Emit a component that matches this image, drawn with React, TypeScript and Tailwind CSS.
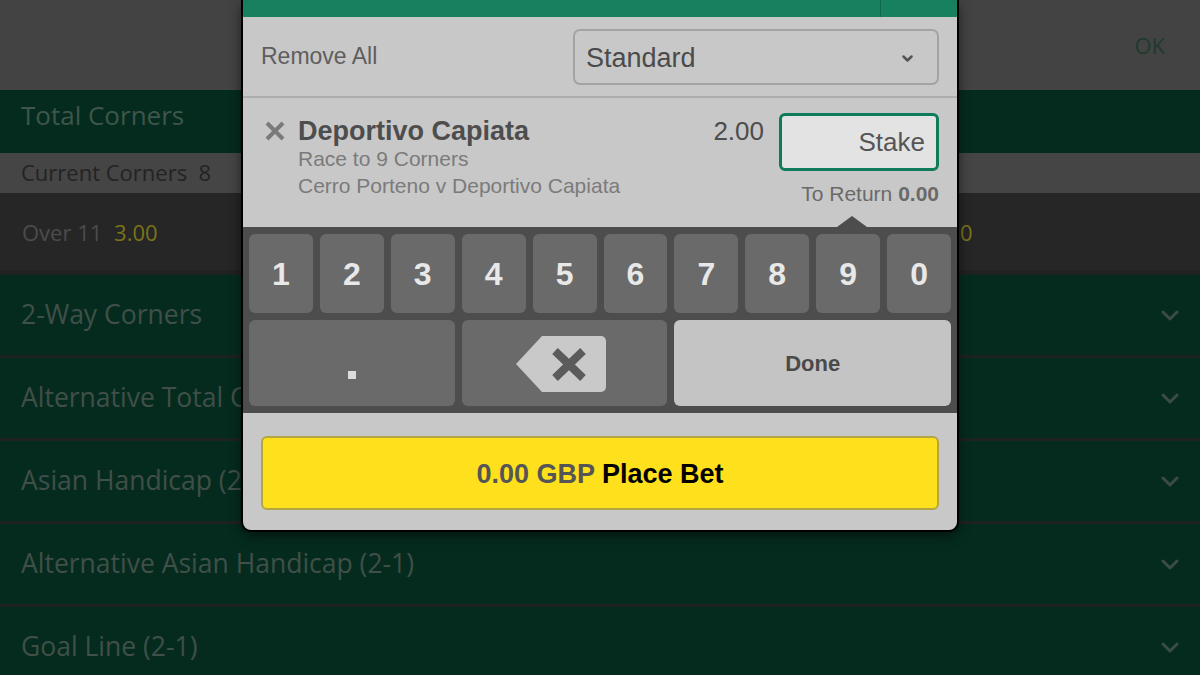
import React from 'react';

const markets = [
  '2-Way Corners',
  'Alternative Total Corners',
  'Asian Handicap (2-1)',
  'Alternative Asian Handicap (2-1)',
  'Goal Line (2-1)',
];

const keys = ['1', '2', '3', '4', '5', '6', '7', '8', '9', '0'];

const Chevron = () => (
  <svg width="18" height="11" viewBox="0 0 18 11" fill="none">
    <polyline points="2,2 9,9 16,2" stroke="#3a4c43" strokeWidth="3" strokeLinecap="round" strokeLinejoin="round" />
  </svg>
);

const BackspaceIcon = () => (
  <svg width="90" height="56" viewBox="0 0 90 56">
    <path d="M26 0 H85 a5 5 0 0 1 5 5 V51 a5 5 0 0 1 -5 5 H26 L0 28 Z" fill="#c9c9c9" />
    <path d="M39 15 L67 42 M67 15 L39 42" stroke="#5b5b5b" strokeWidth="8" strokeLinecap="butt" />
  </svg>
);

const App: React.FC = () => {
  return (
    <div className="relative w-[1200px] h-[675px] overflow-hidden bg-[#052b1f] font-['Open_Sans',sans-serif]">
      {/* Background page (dimmed) */}
      <div className="h-[90px] bg-[#434343] flex items-center justify-end pr-[35px]">
        <span className="text-[22px] text-[#1d3a2c]">OK</span>
      </div>
      <div className="h-[63px] bg-[#052b1f] flex items-center px-[21px] pb-[12px]">
        <span className="text-[26px] text-[#3e564a]">Total Corners</span>
      </div>
      <div className="h-[40px] bg-[#454545] flex items-center px-[21px] pb-[2px]">
        <span className="text-[22px] text-[#232323]">Current Corners&nbsp; 8</span>
      </div>
      <div className="h-[82px] bg-[#262626] grid grid-cols-3 items-center border-b-[5px] border-[#1f2221]">
        <div className="pl-[22px] text-[22px] text-[#4c4c4c] pt-[1px]">
          Over 11 <span className="ml-[6px] text-[#7b7318]">3.00</span>
        </div>
        <div className="pl-[22px] text-[22px] text-[#4c4c4c] pt-[1px]">
          Exactly 11 <span className="ml-[6px] text-[#7b7318]">6.00</span>
        </div>
        <div className="pl-[22px] text-[22px] text-[#4c4c4c] pt-[1px]">
          Under 11 <span className="ml-[6px] text-[#7b7318]">3.00</span>
        </div>
      </div>
      {markets.map((m) => (
        <div key={m} className="h-[83px] bg-[#052b1f] border-b-[3px] border-[#1e2220] flex items-center justify-between pl-[21px] pr-[21px]">
          <span className="text-[26.5px] text-[#404f47]">{m}</span>
          <Chevron />
        </div>
      ))}

      {/* Bet slip modal */}
      <div className="absolute left-[241px] top-0 w-[718px] bg-[#c8c8c8] border-x-2 border-b-2 border-black rounded-b-[10px] overflow-hidden shadow-[0_4px_12px_rgba(0,0,0,0.5)] font-['Liberation_Sans',Arial,sans-serif]">
        <div className="h-[17px] bg-[#16805f] flex">
          <div className="flex-1" />
          <div className="w-[77px] border-l border-[#0e6a4e]" />
        </div>

        <div className="h-[81px] flex items-center justify-between px-[18px] border-b-[2px] border-[#adadad]">
          <span className="text-[23px] text-[#5e5e5e] mt-[-1px]">Remove All</span>
          <div className="w-[366px] h-[56px] border-2 border-[#a3a3a3] rounded-[7px] flex items-center justify-between pl-[11px] pr-[24px]">
            <span className="text-[27px] text-[#4b4b4b] mt-[3px]">Standard</span>
            <svg width="11" height="7" viewBox="0 0 11 7" fill="none" className="mt-[3px]">
              <polyline points="1.5,1.5 5.5,5.5 9.5,1.5" stroke="#555" strokeWidth="2.5" strokeLinecap="round" strokeLinejoin="round" />
            </svg>
          </div>
        </div>

        <div className="h-[129px] flex px-[18px] pt-[20px]">
          <svg width="22" height="20" viewBox="0 0 22 20" className="ml-[3px] mt-[3px] shrink-0">
            <path d="M3 2 L19 18 M19 2 L3 18" stroke="#7a7a7a" strokeWidth="4" />
          </svg>
          <div className="ml-[12px] flex-1 flex flex-col">
            <span className="text-[27px] font-bold text-[#4d4d4d] leading-[26px]">Deportivo Capiata</span>
            <span className="text-[21px] text-[#7b7b7b] leading-[22px] mt-[4px]">Race to 9 Corners</span>
            <span className="text-[21px] text-[#7b7b7b] leading-[22px] mt-[5px]">Cerro Porteno v Deportivo Capiata</span>
          </div>
          <span className="text-[26px] text-[#4d4d4d] leading-[24px] mt-[1px] mr-[15px]">2.00</span>
          <div className="flex flex-col items-end">
            <div className="w-[160px] h-[58px] mt-[-5px] border-[3px] border-[#0f7b5a] rounded-[6px] bg-[#e3e3e3] flex items-center justify-end pr-[11px]">
              <span className="text-[26px] text-[#555]">Stake</span>
            </div>
            <span className="text-[21px] text-[#6a6a6a] mt-[11px] leading-[24px]">
              To Return <span className="font-bold">0.00</span>
            </span>
          </div>
        </div>

        <div className="relative bg-[#4d4d4d] px-[6px] py-[7px] grid grid-cols-10 gap-[7px]">
          <div className="absolute top-[-11px] left-[594px] w-0 h-0 border-l-[15px] border-r-[15px] border-b-[11px] border-l-transparent border-r-transparent border-b-[#4d4d4d]" />
          {keys.map((k) => (
            <div key={k} className="h-[79px] rounded-[6px] bg-[#6a6a6a] flex items-center justify-center">
              <span className="text-[32px] font-bold text-[#e8e8e8]">{k}</span>
            </div>
          ))}
          <div className="col-span-3 h-[86px] rounded-[6px] bg-[#6a6a6a] flex items-center justify-center">
            <div className="w-[8px] h-[8px] bg-[#dcdcdc] mt-[23px]" />
          </div>
          <div className="col-span-3 h-[86px] rounded-[6px] bg-[#6a6a6a] flex items-center justify-center">
            <div className="mr-[7px] mt-[1px]">
              <BackspaceIcon />
            </div>
          </div>
          <div className="col-span-4 h-[86px] rounded-[6px] bg-[#c4c4c4] flex items-center justify-center">
            <span className="text-[22px] font-bold text-[#4a4a4a]">Done</span>
          </div>
        </div>

        <div className="px-[18px] pt-[23px] pb-[20px]">
          <div className="h-[74px] rounded-[6px] bg-[#ffe01c] border-2 border-[#b3a642] flex items-center justify-center">
            <span className="text-[27px] font-bold text-[#555] mt-[2px]">0.00 GBP</span>
            <span className="text-[27px] font-bold text-black ml-[7px] mt-[2px]">Place Bet</span>
          </div>
        </div>
      </div>
    </div>
  );
};

export default App;
